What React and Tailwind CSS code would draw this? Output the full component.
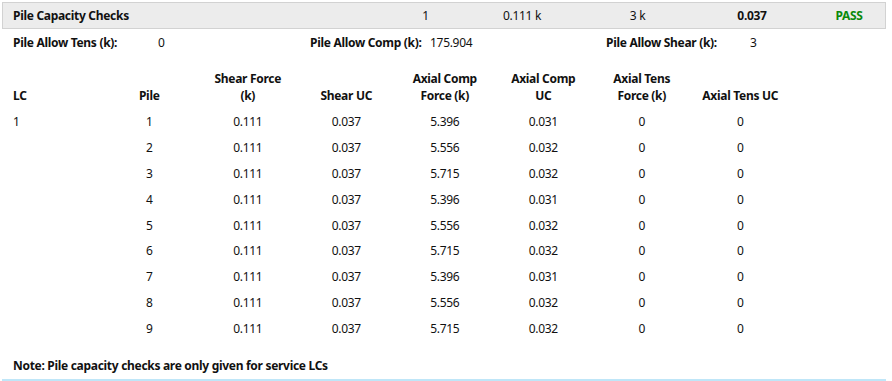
import React from "react";

const rows = [
  ["1", "1", "0.111", "0.037", "5.396", "0.031", "0", "0"],
  ["", "2", "0.111", "0.037", "5.556", "0.032", "0", "0"],
  ["", "3", "0.111", "0.037", "5.715", "0.032", "0", "0"],
  ["", "4", "0.111", "0.037", "5.396", "0.031", "0", "0"],
  ["", "5", "0.111", "0.037", "5.556", "0.032", "0", "0"],
  ["", "6", "0.111", "0.037", "5.715", "0.032", "0", "0"],
  ["", "7", "0.111", "0.037", "5.396", "0.031", "0", "0"],
  ["", "8", "0.111", "0.037", "5.556", "0.032", "0", "0"],
  ["", "9", "0.111", "0.037", "5.715", "0.032", "0", "0"],
];

const headers = [
  ["LC"],
  ["Pile"],
  ["Shear Force", "(k)"],
  ["Shear UC"],
  ["Axial Comp", "Force (k)"],
  ["Axial Comp", "UC"],
  ["Axial Tens", "Force (k)"],
  ["Axial Tens UC"],
];

const cols = "grid grid-cols-[98px_98.5px_98.5px_98.5px_98.5px_98.5px_98.5px_98.5px]";

export default function App() {
  return (
    <div
      className="w-[892px] h-[381px] bg-white text-[12px] tracking-[-0.3px] text-[#111] overflow-hidden flex flex-col"
      style={{ fontFamily: '"Noto Sans", "Open Sans", sans-serif' }}
    >
      {/* title bar */}
      <div className="mt-[2px] ml-[2px] w-[884px] h-[27px] border border-[#d2d2d2] bg-[#ececec] flex items-center">
        <div className="flex-1 pl-[10px] font-bold">Pile Capacity Checks</div>
        <div className="w-[60px] text-center">1</div>
        <div className="w-[60px] ml-[36.5px] text-center">0.111 k</div>
        <div className="w-[60px] ml-[55.5px] text-center">3 k</div>
        <div className="w-[60px] ml-[54.5px] text-center font-bold">0.037</div>
        <div className="w-[60px] ml-[37px] mr-[6px] text-center font-bold text-[#0b8a0b]">PASS</div>
      </div>

      {/* allowables */}
      <div className="h-[28px] flex items-center pl-[13px]">
        <div className="w-[145px] font-bold">Pile Allow Tens (k):</div>
        <div className="w-[152px]">0</div>
        <div className="w-[120px] font-bold">Pile Allow Comp (k):</div>
        <div className="w-[176px]">175.904</div>
        <div className="w-[144px] font-bold">Pile Allow Shear (k):</div>
        <div>3</div>
      </div>

      {/* table header */}
      <div className={`${cols} mt-[13px] pl-[2px] leading-[17px] font-bold`}>
        {headers.map((h, i) => (
          <div
            key={i}
            className={`h-[34px] flex flex-col justify-end ${i === 0 ? "items-start pl-[11px]" : "items-center text-center"}`}
          >
            {h.map((l, j) => (
              <div key={j}>{l}</div>
            ))}
          </div>
        ))}
      </div>

      {/* rows */}
      <div className="mt-[5px] pl-[2px] flex flex-col">
        {rows.map((r, i) => (
          <div key={i} className={`${cols} h-[25.9px] items-center`}>
            {r.map((c, j) => (
              <div key={j} className={j === 0 ? "pl-[11px]" : "text-center"}>
                {c}
              </div>
            ))}
          </div>
        ))}
      </div>

      {/* note */}
      <div className="mt-[15px] pl-[13px] font-bold">Note: Pile capacity checks are only given for service LCs</div>
      <div className="mt-[4px] ml-[2px] w-[884px] h-[2px] bg-[#bfe6f8]" />
    </div>
  );
}
